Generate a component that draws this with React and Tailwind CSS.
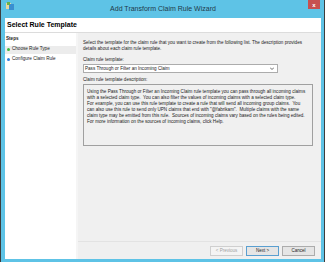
import React from 'react';

const font = { fontFamily: '"Liberation Sans", Arial, sans-serif' };

function AppIcon() {
  return (
    <svg width="8" height="9" viewBox="0 0 8 9">
      <rect x="0" y="1" width="5" height="6" fill="#e8d9a0" />
      <rect x="3" y="2" width="5" height="6" fill="#3a8fd0" />
      <rect x="1" y="0" width="3" height="3" fill="#6bb04a" />
    </svg>
  );
}

function Button({ children, disabled, primary }) {
  return (
    <div
      className={`flex h-[10px] w-[33px] items-center justify-center border text-[4.5px] ${
        disabled
          ? 'border-[#cfcfcf] bg-[#f4f4f4] text-[#a0a0a0]'
          : primary
          ? 'border-[#5a9fd0] bg-[#e5e5e5] text-[#222]'
          : 'border-[#acacac] bg-[#e5e5e5] text-[#222]'
      }`}
    >
      {children}
    </div>
  );
}

export default function App() {
  return (
    <div className="flex h-[262px] w-[325px] bg-[#3d3d3d]" style={font}>
      <div className="ml-[1px] flex h-[262px] w-[323px] flex-col bg-[#5ec3e6] pb-[3px] pl-[4px] pr-[3px]">
        <div className="relative flex h-[18px] shrink-0 items-center">
          <div className="absolute left-[1px] top-[2px]">
            <AppIcon />
          </div>
          <div className="flex-1 text-center text-[7px] text-[#1e3a4a]">Add Transform Claim Rule Wizard</div>
          <div className="absolute right-[1px] top-0 flex h-[9px] w-[12px] items-center justify-center bg-[#c75050] text-[6px] font-bold leading-none text-white">
            x
          </div>
        </div>
        <div className="flex h-[15px] shrink-0 items-center border-b border-[#dcdcdc] bg-white pl-[2px] text-[7px] font-bold text-black">
          Select Rule Template
        </div>
        <div className="flex flex-1">
          <div className="w-[73px] border-r-2 border-[#f5f5f5] bg-white text-[4.6px] text-[#222]">
            <div className="mt-[3px] pl-[1px] font-bold">Steps</div>
            <div className="mt-[3px] flex h-[8px] items-center gap-[2px] bg-[#ececec] pl-[2px]">
              <span className="h-[3px] w-[3px] rounded-full bg-[#3cb83c]" />
              Choose Rule Type
            </div>
            <div className="mt-[2px] flex h-[8px] items-center gap-[2px] pl-[2px]">
              <span className="h-[3px] w-[3px] rounded-full bg-[#2f7fe0]" />
              Configure Claim Rule
            </div>
          </div>
          <div className="flex flex-1 flex-col bg-[#f0f0f0] text-[4.6px] leading-[6px] text-[#222]">
            <div className="flex-1 pl-[5px] pr-[8px] pt-[7px]">
              <div className="whitespace-pre">
                {'Select the template for the claim rule that you want to create from the following list. The description provides\ndetails about each claim rule template.'}
              </div>
              <div className="mt-[5px]">Claim rule template:</div>
              <div className="mt-[1px] flex h-[9px] w-[195px] items-center justify-between border border-[#acacac] bg-white pl-[1px] pr-[3px]">
                <span>Pass Through or Filter an Incoming Claim</span>
                <svg width="4" height="3" viewBox="0 0 4 3">
                  <path d="M0 0.5 L2 2.5 L4 0.5" stroke="#444" strokeWidth="0.8" fill="none" />
                </svg>
              </div>
              <div className="mt-[4px]">Claim rule template description:</div>
              <div className="mt-[1px] h-[62px] border border-[#a0a0a0] bg-[#f0f0f0] px-[3px] pt-[4px] whitespace-pre">
                {'Using the Pass Through or Filter an Incoming Claim rule template you can pass through all incoming claims\nwith a selected claim type.  You can also filter the values of incoming claims with a selected claim type.\nFor example, you can use this rule template to create a rule that will send all incoming group claims.  You\ncan also use this rule to send only UPN claims that end with "@fabrikam".  Multiple claims with the same\nclaim type may be emitted from this rule.  Sources of incoming claims vary based on the rules being edited.\nFor more information on the sources of incoming claims, click Help.'}
              </div>
            </div>
            <div className="flex h-[18px] items-start justify-end gap-[3px] border-t border-[#e3e3e3] pr-[6px] pt-[4px]">
              <Button disabled>&lt; Previous</Button>
              <Button primary>Next &gt;</Button>
              <Button>Cancel</Button>
            </div>
          </div>
        </div>
      </div>
    </div>
  );
}
